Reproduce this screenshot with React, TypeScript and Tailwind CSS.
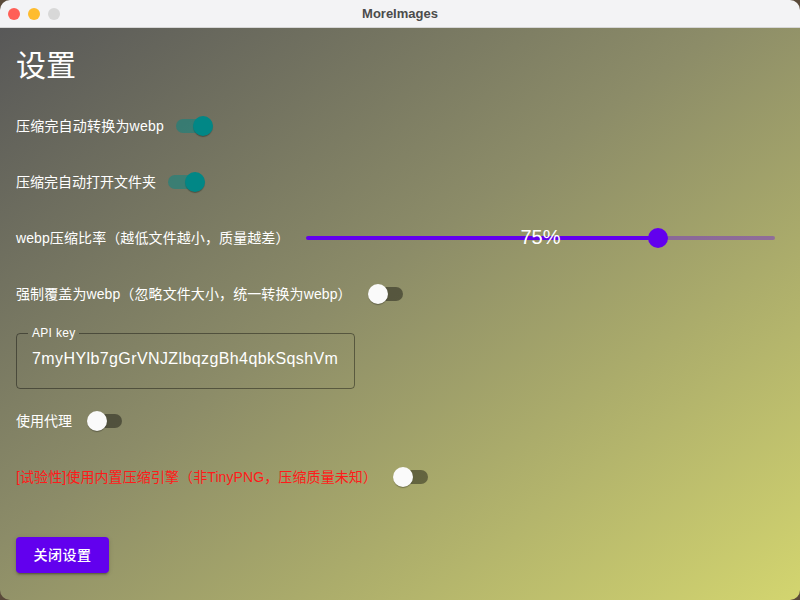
import React from "react";

const FONT = '"Liberation Sans","Noto Sans CJK SC",sans-serif';

function Switch({ on, ml }: { on: boolean; ml: string }) {
  return (
    <div className={`relative h-[14px] w-[34px] shrink-0 rounded-full ${ml} ${on ? "bg-[#018786]/50" : "bg-black/40"}`}>
      {on ? (
        <div className="absolute right-[-3px] top-[-3px] h-[20px] w-[20px] rounded-full bg-[#018786] shadow-[0_2px_1px_-1px_rgba(0,0,0,0.2),0_1px_1px_rgba(0,0,0,0.14)]" />
      ) : (
        <div className="absolute left-[-1px] top-[-3px] h-[20px] w-[20px] rounded-full bg-[#fafafa] shadow-[0_2px_1px_-1px_rgba(0,0,0,0.2),0_1px_1px_rgba(0,0,0,0.14)]" />
      )}
    </div>
  );
}

export default function App() {
  return (
    <div className="h-[600px] w-[800px] overflow-hidden bg-[#5a4a3a]" style={{ fontFamily: FONT }}>
      <div className="flex h-full w-full flex-col overflow-hidden rounded-[10px]">
        {/* Title bar */}
        <div className="relative flex h-[28px] shrink-0 items-center justify-center border-b border-[#d6d6d6] bg-[#f3f3f5]">
          <div className="absolute left-[8px] top-[8px] flex gap-[8px]">
            <div className="h-[12px] w-[12px] rounded-full bg-[#ff5f57]" />
            <div className="h-[12px] w-[12px] rounded-full bg-[#febc2e]" />
            <div className="h-[12px] w-[12px] rounded-full bg-[#d8d8d8]" />
          </div>
          <span className="text-[13px] font-bold text-[#4b4b4b]">MoreImages</span>
        </div>

        {/* Body */}
        <div className="flex flex-1 flex-col bg-[linear-gradient(to_bottom_right,#585858,#8c8c68_45%,#d3d56f)] px-[16px] pt-[16px] text-white">
          <div className="h-[44px] text-[30px] leading-[44px]">设置</div>
          <div className="mt-[10px] flex h-[56px] items-center text-[14px]">
            <span className="w-[147px] whitespace-nowrap tracking-[0.2px]">压缩完自动转换为webp</span>
            <Switch on ml="ml-[13px]" />
          </div>
          <div className="flex h-[56px] items-center text-[14px]">
            <span className="w-[140px] whitespace-nowrap">压缩完自动打开文件夹</span>
            <Switch on ml="ml-[12px]" />
          </div>
          <div className="flex h-[56px] items-center text-[14px]">
            <span className="w-[268px] whitespace-nowrap tracking-[0.1px]">webp压缩比率（越低文件越小，质量越差）</span>
            <div className="relative ml-[22px] mr-[9px] flex h-[20px] flex-1 items-center">
              <div className="h-[4px] w-[75%] rounded-l-full bg-[#6200ee]" />
              <div className="h-[4px] flex-1 rounded-r-full bg-[#6200ee]/35" />
              <div className="absolute left-[75%] top-0 ml-[-10px] h-[20px] w-[20px] rounded-full bg-[#6200ee]" />
              <span className="absolute left-1/2 top-[-8px] -translate-x-1/2 text-[20px] leading-[34px]">75%</span>
            </div>
          </div>
          <div className="flex h-[56px] items-center text-[14px]">
            <span className="w-[329px] whitespace-nowrap tracking-[0.1px]">强制覆盖为webp（忽略文件大小，统一转换为webp）</span>
            <Switch on={false} ml="ml-[24px]" />
          </div>

          <fieldset className="mt-[5px] h-[62px] w-[339px] rounded-[4px] border border-black/40 px-[15px]">
            <legend className="ml-[-4px] px-[4px] text-[12px] leading-[12px] tracking-[0.3px] text-white">API key</legend>
            <div className="pt-[10px] text-[16px] leading-[20px] tracking-[0.4px] text-white">7myHYlb7gGrVNJZlbqzgBh4qbkSqshVm</div>
          </fieldset>

          <div className="mt-[4px] flex h-[56px] items-center text-[14px]">
            <span className="w-[56px] whitespace-nowrap">使用代理</span>
            <Switch on={false} ml="ml-[16px]" />
          </div>
          <div className="flex h-[56px] items-center text-[14px] text-[#ff1a1a]">
            <span className="w-[354px] whitespace-nowrap tracking-[0.1px]">[试验性]使用内置压缩引擎（非TinyPNG，压缩质量未知）</span>
            <Switch on={false} ml="ml-[24px]" />
          </div>

          <div className="mt-[32px]">
            <button className="h-[36px] w-[93px] rounded-[4px] bg-[#6200ee] text-[14px] font-medium tracking-[0.5px] text-white shadow-[0_3px_1px_-2px_rgba(0,0,0,0.2),0_2px_2px_rgba(0,0,0,0.14),0_1px_5px_rgba(0,0,0,0.12)]">
              关闭设置
            </button>
          </div>
        </div>
      </div>
    </div>
  );
}
